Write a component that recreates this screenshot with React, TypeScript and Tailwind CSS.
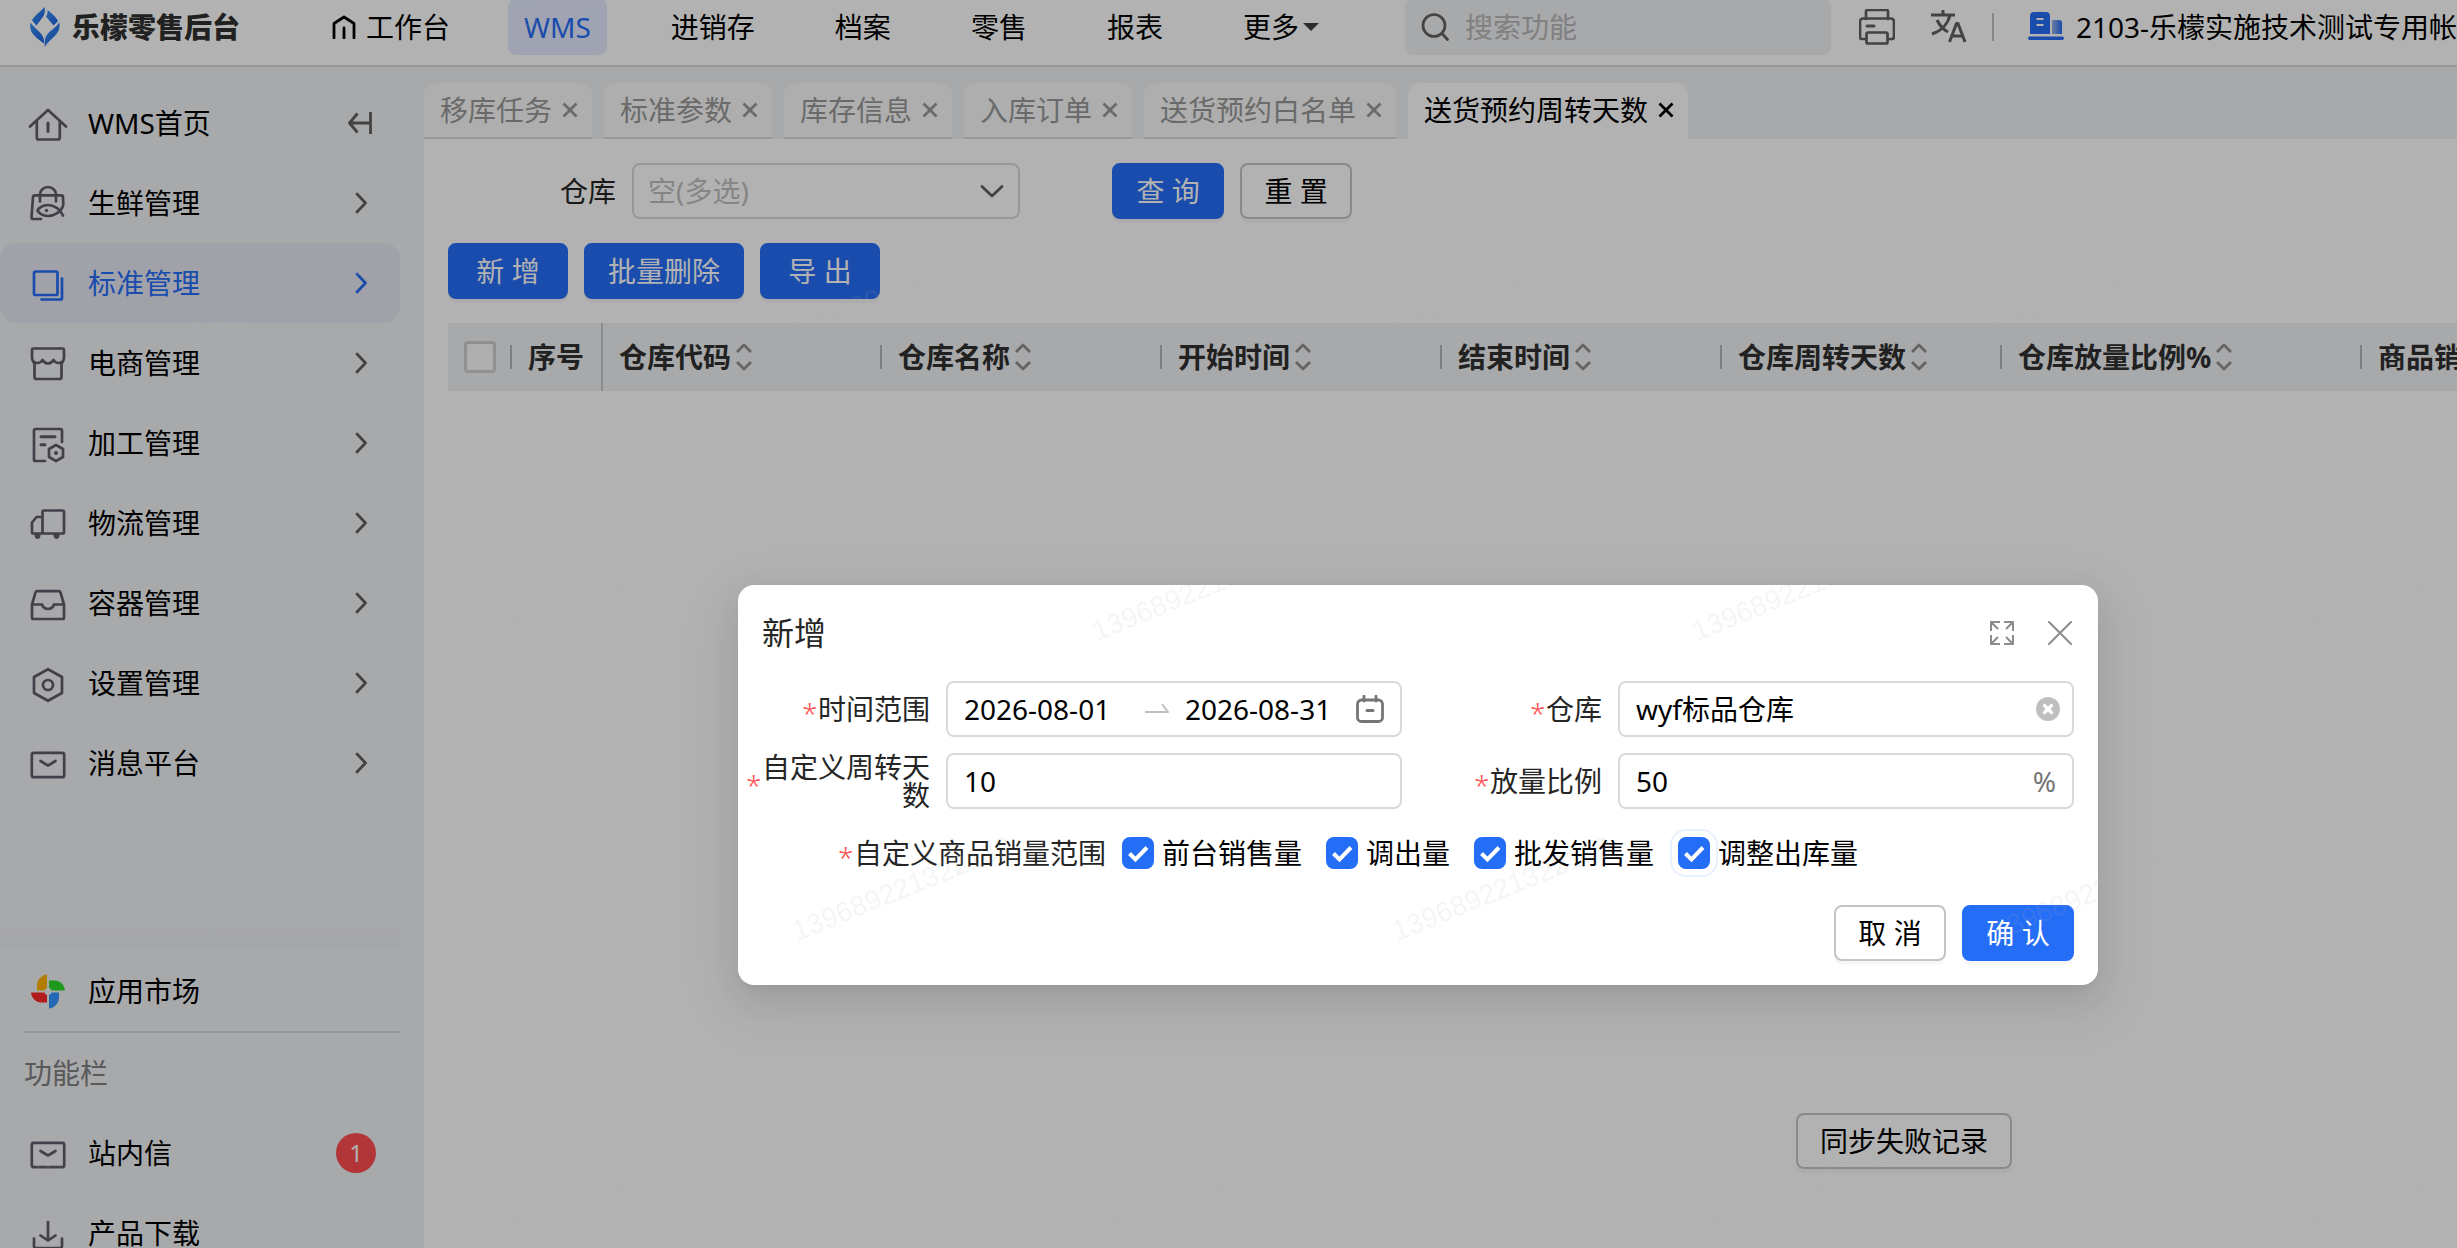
import { useState } from 'react'
import type { ReactNode } from 'react'
import clsx from 'clsx'

function Icon({ children, className, size = 40 }: { children: ReactNode; className?: string; size?: number }) {
  return (
    <svg
      viewBox={`0 0 ${size} ${size}`}
      width={size}
      height={size}
      fill="none"
      stroke="currentColor"
      strokeWidth="2.7"
      strokeLinecap="round"
      strokeLinejoin="round"
      className={clsx('shrink-0', className)}
      aria-hidden="true"
    >
      {children}
    </svg>
  )
}

const mailIcon = (
  <>
    <rect x="3.8" y="9.8" width="32.4" height="24.4" rx="2" />
    <path d="M12.5 18l7.5 4.5 7.5-4.5" />
  </>
)

const menu = [
  {
    name: 'WMS首页',
    icon: (
      <>
        <path d="M2 23.5L20 7l18 16.500M8.800 18v16.500a2 2 0 0 0 2 2h19a2 2 0 0 0 2-2V18" />
        <path d="M20 20v8.500" strokeWidth="3" />
      </>
    )
  },
  {
    name: '生鲜管理',
    icon: (
      <>
        <path d="M12 18.500v-7a8 7.500 0 0 1 16 0v7" />
        <path d="M13 36H5a1.500 1.500 0 0 1-1.500-1.600L5 14a1.800 1.800 0 0 1 1.800-1.700h26.400a1.800 1.800 0 0 1 1.800 1.700l.3 7.500" />
        <path d="M35 23c-2.500 6.500-9 10-15 10-5.500 0-9.500-3-10.500-5.500C10.500 25 14.500 22 20 22c6 0 12.500 4 15 10.500" />
        <circle cx="18.500" cy="27.500" r="1.700" fill="currentColor" stroke="none" />
      </>
    )
  },
  {
    name: '标准管理',
    active: true,
    icon: (
      <>
        <rect x="6" y="8.500" width="23.500" height="23.500" rx="1.500" />
        <path d="M34 15.500V35a1.500 1.500 0 0 1-1.500 1.500H13.500" />
      </>
    )
  },
  {
    name: '电商管理',
    icon: (
      <>
        <path d="M4 14V7a1.500 1.500 0 0 1 1.500-1.500h29A1.500 1.500 0 0 1 36 7v7c0 4-2 6-5 6s-4.500-1-5.500-3c-1.500 2.500-3.500 3.500-5.500 3.500s-4-1-5.500-3.500c-1 2-2.500 3-5.500 3s-5-2-5-6z" />
        <path d="M6.500 19.500v14.500a2 2 0 0 0 2 2h23a2 2 0 0 0 2-2V19.500" />
      </>
    )
  },
  {
    name: '加工管理',
    icon: (
      <>
        <path d="M34 19V7.500A1.500 1.500 0 0 0 32.500 6h-25A1.500 1.500 0 0 0 6 7.500v29A1.500 1.500 0 0 0 7.500 38H17" />
        <path d="M13 13.700h14M13 21.700h4" strokeWidth="3" />
        <path d="M28 22l7 4v8l-7 4-7-4v-8z" />
        <circle cx="28" cy="30" r="2" fill="currentColor" stroke="none" />
      </>
    )
  },
  {
    name: '物流管理',
    icon: (
      <>
        <path d="M14.500 30.500V9A1.500 1.500 0 0 1 16 7.500h18.500A1.500 1.500 0 0 1 36 9v20a1.500 1.500 0 0 1-1.500 1.500h-29A1.500 1.500 0 0 1 4 29V19.500L8.500 14h6" />
        <path d="M7 31.500h5V33a2.500 2.500 0 0 1-5 0zM26 31.500h5V33a2.500 2.500 0 0 1-5 0z" fill="currentColor" strokeWidth="1" />
      </>
    )
  },
  {
    name: '容器管理',
    icon: (
      <path d="M4 21.500v13a1.500 1.500 0 0 0 1.500 1.500h29a1.500 1.500 0 0 0 1.500-1.500v-13L32.500 9.500A1.800 1.800 0 0 0 30.800 8.200H9.200a1.800 1.800 0 0 0-1.700 1.300zh10c1 3 3 4.500 6 4.500s5-1.500 6-4.500h10" />
    )
  },
  {
    name: '设置管理',
    icon: (
      <>
        <path d="M20 6.200l14 7.800v16l-14 7.800L6 30V14z" />
        <circle cx="20" cy="22" r="5" />
      </>
    )
  },
  { name: '消息平台', icon: mailIcon }
]

const navItems = ['进销存', '档案', '零售', '报表']

const tabs = ['移库任务', '标准参数', '库存信息', '入库订单', '送货预约白名单', '送货预约周转天数']

const columns = ['仓库代码', '仓库名称', '开始时间', '结束时间', '仓库周转天数', '仓库放量比例%', '商品销']

const salesScopes = ['前台销售量', '调出量', '批发销售量', '调整出库量']

function Logo() {
  return (
    <svg viewBox="0 0 30 40" width="30" height="40" className="shrink-0" aria-hidden="true">
      <defs>
        <linearGradient id="logo" x1="0" y1="0" x2="1" y2="1">
          <stop offset="0" stopColor="#3a94ee" />
          <stop offset="1" stopColor="#1f5fe6" />
        </linearGradient>
      </defs>
      <g fill="url(#logo)">
        <path d="M14.500 0C15 3 15 6.500 13.500 9L6.500 18.500 2 13.500C4.500 8 10.500 5 14.500 0z" />
        <path d="M17.500 3c4 3.500 8.500 6.500 10.500 11l-4.500 4.500-7.500-9C17.500 7.500 17.800 5.500 17.500 3z" />
        <path d="M.8 15.500c3 6 10.500 9 12.500 15 .7 2 .8 4 .7 6C8 31.500-2.500 26 .8 15.500z" />
        <path d="M29.200 15.500C32 27 19.500 31.500 14.800 40c-.5-4-.3-8.500 2-12 3-4.500 9.500-7.500 12.400-12.500z" />
      </g>
    </svg>
  )
}

function Header() {
  return (
    <header className="flex h-[67px] shrink-0 items-center overflow-hidden border-b-2 border-[#d9d9d9] bg-white pb-[11px] pl-[30px] whitespace-nowrap">
      <Logo />
      <h1 className="ml-3 text-[28px] font-black text-[#303030]">乐檬零售后台</h1>
      <nav className="ml-[92px] flex shrink-0 items-center gap-12">
        <a href="#home" className="flex h-14 items-center gap-2.5 pr-2.5">
          <Icon size={24}>
            <path d="M2 23V8.500L12 2l10 6.500V23M12 13v10" strokeWidth="2.800" />
          </Icon>
          工作台
        </a>
        <a href="#wms" className="flex h-14 items-center rounded-lg bg-[#e6eafe] px-4 text-[#246df6]">
          WMS
        </a>
        {navItems.map(item => (
          <a key={item} href="#nav" className="flex h-14 items-center px-4">
            {item}
          </a>
        ))}
        <button type="button" className="flex h-14 items-center gap-1 pl-4">
          更多
          <svg viewBox="0 0 16 8" width="16" height="8" className="fill-[#404040]" aria-hidden="true">
            <path d="M0 0h16L8 8z" />
          </svg>
        </button>
      </nav>
      <label className="ml-[86px] flex h-14 w-[426px] shrink-0 items-center gap-4 rounded-lg bg-[#f0f2f5] px-4">
        <Icon size={28} className="text-[#606060]">
          <circle cx="13" cy="12.500" r="11" />
          <path d="M21 20.500l5.500 6" />
        </Icon>
        <input aria-label="搜索功能" placeholder="搜索功能" className="w-full min-w-0 outline-none placeholder:text-[#b8b8b8]" />
      </label>
      <button type="button" aria-label="打印" className="ml-7 text-[#606060]">
        <Icon size={36}>
          <path d="M7 10V2.500A1.500 1.500 0 0 1 8.500 1h19A1.500 1.500 0 0 1 29 2.500V10" />
          <path d="M7 30H3a2 2 0 0 1-2-2V12.500A3 3 0 0 1 4 9.500h28a3 3 0 0 1 3 3V28a2 2 0 0 1-2 2h-4" />
          <rect x="7.500" y="23.500" width="21" height="11" rx="1.500" />
          <path d="M8 17h7" strokeWidth="3" />
        </Icon>
      </button>
      <button type="button" aria-label="语言" className="ml-9 text-[#606060]">
        <Icon size={36}>
          <g strokeWidth="3" strokeLinecap="butt">
            <path d="M0 6h24M12 1v5M19 6C17 15 10 22 1 25M6 11c3 6 7 10 11 12" />
            <path d="M18.500 33l7-18.500h1.500L34 33M21 27h10.500" />
          </g>
        </Icon>
      </button>
      <span className="ml-[25px] h-7 w-0.5 shrink-0 bg-[#c0c0c0]" />
      <svg viewBox="0 0 36 30" width="36" height="30" className="ml-[34px] shrink-0" aria-hidden="true">
        <defs>
          <linearGradient id="annex">
            <stop offset="0" stopColor="#9bb2e8" />
            <stop offset="1" stopColor="#246df6" />
          </linearGradient>
        </defs>
        <path d="M24 22V8h7a3 3 0 0 1 3 3v11z" fill="url(#annex)" />
        <path d="M2 22V4a4 4 0 0 1 4-4h12a4 4 0 0 1 4 4v18z" fill="#246df6" />
        <path d="M8.500 7h7M8.500 13h7" stroke="#fff" strokeWidth="2.200" />
        <rect y="24.500" width="36" height="3.600" rx="1.800" fill="#246df6" />
      </svg>
      <span className="ml-3">2103-乐檬实施技术测试专用帐</span>
    </header>
  )
}

function Sidebar() {
  return (
    <aside className="flex w-[424px] shrink-0 flex-col pr-6">
      <nav className="flex-1 pt-4">
        {menu.map((item, i) => (
          <a
            key={item.name}
            href="#menu"
            className={clsx('flex h-20 items-center rounded-2xl px-7', item.active && 'bg-[#e7e9f3] text-[#246df6]')}
          >
            <Icon className={item.active ? 'text-[#246df6]' : 'text-[#5f5d6b]'}>{item.icon}</Icon>
            <span className="ml-5 flex-1">{item.name}</span>
            {i === 0 ? (
              <Icon size={24} className="text-[#606060]">
                <path d="M9.500 2.500L1.500 12l8 9.500M1.500 12H22M22.500 1v22" strokeWidth="2.800" strokeLinecap="butt" />
              </Icon>
            ) : (
              <Icon size={22} className={item.active ? 'text-[#246df6]' : 'text-[#606060]'}>
                <path d="M7 2l8.500 9L7 20" strokeWidth="2.800" />
              </Icon>
            )}
          </a>
        ))}
      </nav>
      <div className="h-8 bg-linear-to-t from-black/1 to-transparent" />
      <div className="h-[301px] shrink-0 pt-1">
        <a href="#market" className="flex h-20 items-center px-7">
          <svg viewBox="0 0 40 40" width="40" height="40" aria-hidden="true">
            <path d="M19 3.500C13 4.500 9 9 9 14v5.500h10z" fill="#ffb300" />
            <path d="M21 9.500h6c6 .5 9.500 5 10 10H21z" fill="#2cdb2c" />
            <path d="M31 21.500V27c-.5 6-5 10-10 10.500v-16z" fill="#3196ff" />
            <path d="M3 21.500h16v10h-6c-6-.5-9.500-5-10-10z" fill="#ff2828" />
            <circle cx="20" cy="20.500" r="3.500" fill="#f0f2f5" />
          </svg>
          <span className="ml-5">应用市场</span>
        </a>
        <hr className="ml-6 border-t-2 border-[#d6d7d9]" />
        <h2 className="flex h-20 items-center pl-6 text-[#808080]">功能栏</h2>
        <a href="#mail" className="flex h-20 items-center pr-6 pl-7">
          <Icon className="text-[#5f5d6b]">{mailIcon}</Icon>
          <span className="ml-5 flex-1">站内信</span>
          <span className="flex size-10 items-center justify-center rounded-full bg-[#ff4d4f] text-2xl text-white">1</span>
        </a>
        <a href="#download" className="flex h-20 items-center px-7">
          <Icon className="text-[#5f5d6b]">
            <path d="M20 9v18.500M12.500 22.500l7.500 5 7.500-5M6 25.500V33a2 2 0 0 0 2 2h24a2 2 0 0 0 2-2v-7.500" />
          </Icon>
          <span className="ml-5">产品下载</span>
        </a>
      </div>
    </aside>
  )
}

function Tabs() {
  return (
    <div className="flex gap-3 pt-4">
      {tabs.map((tab, i) => {
        const active = i === tabs.length - 1
        return (
          <div
            key={tab}
            className={clsx(
              'flex h-14 items-center gap-2 rounded-t-xl border-b-2 pr-3 pl-4',
              active ? 'border-white bg-white' : 'border-[#d9d9d9] bg-[#f9f9f9] text-[#999]'
            )}
          >
            <a href="#tab">{tab}</a>
            <button type="button" aria-label={`关闭${tab}`}>
              <Icon size={20}>
                <path d="M3.500 3.500l13 13M16.500 3.500l-13 13" strokeWidth="2.800" strokeLinecap="butt" />
              </Icon>
            </button>
          </div>
        )
      })}
    </div>
  )
}

function Button({ children, primary, className }: { children: ReactNode; primary?: boolean; className?: string }) {
  return (
    <button
      type="button"
      className={clsx(
        'h-14 shrink-0 rounded-lg border-2 text-center whitespace-nowrap shadow-[0_4px_0_rgba(0,0,0,0.03)]',
        primary ? 'border-[#246df6] bg-[#246df6] text-white' : 'border-[#c4c4c4] bg-white',
        className
      )}
    >
      {children}
    </button>
  )
}

function HeadTable() {
  return (
    <table className="w-[2474px] table-fixed border-collapse bg-[#f0f2f5] text-left text-[#303030]">
      <colgroup>
        <col className="w-16" />
        <col className="w-[90px]" />
        {columns.map((c, i) => (
          <col key={c} className={i === 5 ? 'w-[360px]' : i === 6 ? 'w-[560px]' : 'w-[280px]'} />
        ))}
      </colgroup>
      <thead>
        <tr className="h-[68px]">
          <th className="p-0">
            <div className="flex items-center justify-between pl-4">
              <input type="checkbox" aria-label="全选" className="size-8 appearance-none rounded-sm border-3 border-[#cfcfcf] bg-[#fafafa]" />
              <span className="h-6 w-0.5 bg-[#b4b6ba]" />
            </div>
          </th>
          <th className="border-r-2 border-[#c8cacd] p-0 pl-4 font-bold">序号</th>
          {columns.map((c, i) => (
            <th key={c} className="p-0 pl-4 font-bold">
              <div className="flex items-center whitespace-nowrap">
                {c}
                {i < columns.length - 1 && (
                  <>
                    <Icon size={28} className="text-[#909090]">
                      <path d="M6 9l7-7 7 7M6 19l7 7 7-7" strokeWidth="2.800" strokeLinecap="butt" />
                    </Icon>
                    <span className="ml-auto h-6 w-0.5 bg-[#b4b6ba]" />
                  </>
                )}
              </div>
            </th>
          ))}
        </tr>
      </thead>
    </table>
  )
}

function Content() {
  return (
    <main className="flex min-w-0 flex-1 flex-col overflow-hidden">
      <Tabs />
      <section className="flex flex-1 flex-col bg-white pt-6 pl-6">
        <div className="flex items-center pl-28">
          <label htmlFor="warehouse" className="mr-4 text-[#262626]">
            仓库
          </label>
          <div className="relative w-[388px]">
            <select
              id="warehouse"
              className="h-14 w-full appearance-none rounded-lg border-2 border-[#d9d9d9] bg-white pl-3.5 text-[#bfbfbf]"
            >
              <option>空(多选)</option>
            </select>
            <Icon size={24} className="pointer-events-none absolute top-4 right-4 text-[#606060]">
              <path d="M2 7.500l10 9.500 10-9.500" strokeWidth="2.800" />
            </Icon>
          </div>
          <Button primary className="ml-[92px] w-28">查 询</Button>
          <Button className="ml-4 w-28">重 置</Button>
        </div>
        <div className="mt-6 flex gap-4">
          <Button primary className="w-[120px]">新 增</Button>
          <Button primary className="w-40">批量删除</Button>
          <Button primary className="w-[120px]">导 出</Button>
        </div>
        <div className="mt-6 overflow-hidden">
          <HeadTable />
        </div>
        <div className="mt-auto flex justify-end pr-[445px] pb-[79px]">
          <Button className="w-[216px]">同步失败记录</Button>
        </div>
      </section>
    </main>
  )
}

function Field({ id, label, wide, children }: { id: string; label: string; wide?: boolean; children: ReactNode }) {
  return (
    <div className={clsx('flex h-14 items-center gap-4', wide && 'col-span-2')}>
      <label
        htmlFor={id}
        className={clsx('flex shrink-0 items-center justify-end text-right leading-7 text-[#262626]', wide ? 'w-[360px]' : 'w-[184px]')}
      >
        <span className="w-4 shrink-0 pt-2 text-left font-light text-[#ff4d4f]">*</span>
        <span>{label}</span>
      </label>
      {children}
    </div>
  )
}

const box = 'flex h-14 flex-1 items-center rounded-lg border-2 border-[#d9d9d9] px-4'

function CreateDialog() {
  const [scopes, setScopes] = useState<string[]>(salesScopes)

  function toggle(name: string) {
    setScopes(scopes.includes(name) ? scopes.filter(s => s !== name) : [...scopes, name])
  }

  return (
    <div
      role="dialog"
      aria-label="新增"
      className="w-[1360px] rounded-2xl bg-white py-6 pr-6 pl-2 shadow-[0_12px_32px_rgba(0,0,0,0.08),0_6px_12px_-8px_rgba(0,0,0,0.12),0_18px_56px_16px_rgba(0,0,0,0.05)]"
    >
      <div className="flex h-12 items-center pr-0.5 pl-4 text-[#262626]">
        <h2 className="flex-1 text-[32px]">新增</h2>
        <button type="button" aria-label="全屏" className="text-[#8c8c8c]">
          <Icon size={24}>
            <path
              d="M1 10V1h9M1 1l7 7M14 1h9v9M23 1l-7 7M1 14v9h9M1 23l7-7M23 14v9h-9M23 23l-7-7"
              strokeWidth="2"
              strokeLinecap="butt"
            />
          </Icon>
        </button>
        <button type="button" aria-label="关闭" className="ml-[34px] text-[#8c8c8c]">
          <Icon size={24}>
            <path d="M1 1l22 22M23 1L1 23" strokeWidth="2" />
          </Icon>
        </button>
      </div>

      <div className="mt-6 grid grid-cols-2 gap-4">
        <Field id="start" label="时间范围">
          <div className={box}>
            <input id="start" defaultValue="2026-08-01" className="w-[181px] outline-none" />
            <Icon size={24} className="text-[#bfbfbf]">
              <path d="M0 15h23l-6-8" strokeWidth="2" strokeLinecap="butt" />
            </Icon>
            <input aria-label="结束日期" defaultValue="2026-08-31" className="ml-4 w-0 flex-1 outline-none" />
            <Icon size={28} className="text-[#757575]">
              <rect x="1.500" y="5" width="25" height="21.500" rx="4" strokeWidth="2.800" />
              <path d="M8 1v5M20 1v5" strokeWidth="2.800" />
              <path d="M11 15.500h6" strokeWidth="3" />
            </Icon>
          </div>
        </Field>
        <Field id="store" label="仓库">
          <div className={box}>
            <input id="store" defaultValue="wyf标品仓库" className="w-0 flex-1 outline-none" />
            <button type="button" aria-label="清除" className="mr-[-4px]">
              <svg viewBox="0 0 24 24" width="24" height="24" aria-hidden="true">
                <circle cx="12" cy="12" r="12" fill="#bfbfbf" />
                <path d="M8.500 8.500l7 7M15.500 8.500l-7 7" stroke="#fff" strokeWidth="3.200" strokeLinecap="round" />
              </svg>
            </button>
          </div>
        </Field>
        <Field id="days" label="自定义周转天数">
          <div className={box}>
            <input id="days" defaultValue="10" className="w-0 flex-1 outline-none" />
          </div>
        </Field>
        <Field id="ratio" label="放量比例">
          <div className={box}>
            <input id="ratio" defaultValue="50" className="w-0 flex-1 outline-none" />
            <span className="text-[#757575]">%</span>
          </div>
        </Field>
        <Field id="scope-0" label="自定义商品销量范围" wide>
          <div className="flex gap-6">
            {salesScopes.map((name, i) => (
              <label key={name} className="flex items-center gap-2 whitespace-nowrap">
                <span className="relative flex">
                  <input
                    id={`scope-${i}`}
                    type="checkbox"
                    checked={scopes.includes(name)}
                    onChange={() => toggle(name)}
                    className={clsx(
                      'peer size-8 appearance-none rounded-lg border-2 border-[#d9d9d9] checked:border-[#246df6] checked:bg-[#246df6]',
                      i === salesScopes.length - 1 && 'outline-2 outline-offset-6 outline-[#e9f0fe]'
                    )}
                  />
                  <svg
                    viewBox="0 0 32 32"
                    className="pointer-events-none absolute inset-0 hidden size-8 peer-checked:block"
                    aria-hidden="true"
                  >
                    <path d="M7.500 16.500l6 6L25 10.500" fill="none" stroke="#fff" strokeWidth="4" />
                  </svg>
                </span>
                {name}
              </label>
            ))}
          </div>
        </Field>
      </div>

      <div className="mt-6 flex justify-end gap-4">
        <Button className="w-28">取 消</Button>
        <Button primary className="w-28">确 认</Button>
      </div>
    </div>
  )
}

// account number repeated diagonally over the whole page
function Watermark() {
  return (
    <svg className="pointer-events-none absolute inset-0 size-full" aria-hidden="true">
      <defs>
        <pattern id="mark" x="153" y="100" width="600" height="600" patternUnits="userSpaceOnUse">
          <g className="fill-[#a8b2b0]/12 font-['Liberation_Sans'] text-[28px]">
            <text transform="translate(44 241) rotate(-22)">139689221322132</text>
            <text transform="translate(344 541) rotate(-22)">139689221322132</text>
          </g>
        </pattern>
      </defs>
      <rect width="100%" height="100%" fill="url(#mark)" />
    </svg>
  )
}

export default function App() {
  return (
    <div className="relative flex h-screen flex-col overflow-hidden bg-[#f0f2f5] font-['Noto_Sans','Noto_Sans_CJK_SC',sans-serif] text-[28px] leading-10 text-black">
      <Header />
      <div className="flex min-h-0 flex-1">
        <Sidebar />
        <Content />
      </div>
      <div className="absolute inset-0 bg-black/30" />
      <div className="absolute inset-0 flex items-start justify-center pt-[585px] pl-[379px]">
        <CreateDialog />
      </div>
      <Watermark />
    </div>
  )
}
